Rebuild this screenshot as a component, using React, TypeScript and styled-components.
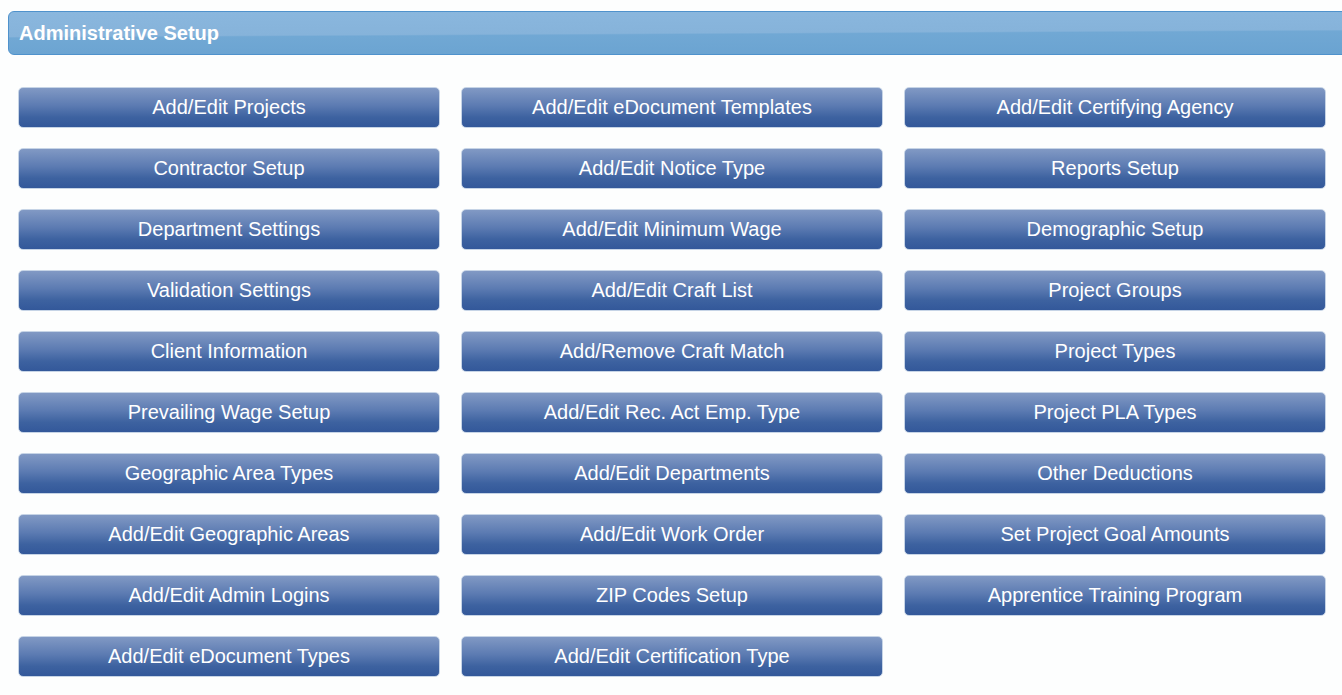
import React from "react";
import styled, { createGlobalStyle } from "styled-components";

const GlobalStyle = createGlobalStyle`
  html, body {
    margin: 0;
    padding: 0;
    background: #fdfefe;
    overflow: hidden;
  }
  body {
    font-family: "Liberation Sans", Arial, sans-serif;
  }
`;

const Page = styled.div`
  padding: 11px 0 0 8px;
`;

const SectionHeader = styled.div`
  height: 42px;
  margin-right: -12px;
  border: 1px solid #4f92cc;
  border-radius: 6px;
  background: linear-gradient(
    179.7deg,
    #8ab7de 0%,
    #86b3da 50%,
    #71a8d4 53%,
    #6aa3d1 100%
  );
  display: flex;
  align-items: center;
  padding-left: 10px;
  color: #ffffff;
  font-size: 20px;
  font-weight: bold;
`;

const ButtonGrid = styled.div`
  display: grid;
  grid-template-columns: repeat(3, 422px);
  grid-auto-rows: 41px;
  column-gap: 21px;
  row-gap: 20px;
  margin: 32px 0 0 10px;
`;

const SetupButton = styled.button`
  box-sizing: border-box;
  height: 41px;
  border: 1px solid #c6d4e6;
  border-radius: 5px;
  background: linear-gradient(to bottom, #8199c4 0%, #5c7bb2 45%, #3d62a0 75%, #33589a 100%);
  color: #ffffff;
  font-family: "Liberation Sans", Arial, sans-serif;
  font-size: 20px;
  cursor: pointer;
  padding: 0;
`;

const items = [
  "Add/Edit Projects",
  "Add/Edit eDocument Templates",
  "Add/Edit Certifying Agency",
  "Contractor Setup",
  "Add/Edit Notice Type",
  "Reports Setup",
  "Department Settings",
  "Add/Edit Minimum Wage",
  "Demographic Setup",
  "Validation Settings",
  "Add/Edit Craft List",
  "Project Groups",
  "Client Information",
  "Add/Remove Craft Match",
  "Project Types",
  "Prevailing Wage Setup",
  "Add/Edit Rec. Act Emp. Type",
  "Project PLA Types",
  "Geographic Area Types",
  "Add/Edit Departments",
  "Other Deductions",
  "Add/Edit Geographic Areas",
  "Add/Edit Work Order",
  "Set Project Goal Amounts",
  "Add/Edit Admin Logins",
  "ZIP Codes Setup",
  "Apprentice Training Program",
  "Add/Edit eDocument Types",
  "Add/Edit Certification Type",
];

function App() {
  return (
    <Page>
      <GlobalStyle />
      <SectionHeader>Administrative Setup</SectionHeader>
      <ButtonGrid>
        {items.map((label) => (
          <SetupButton key={label} type="button">
            {label}
          </SetupButton>
        ))}
      </ButtonGrid>
    </Page>
  );
}

export default App;
